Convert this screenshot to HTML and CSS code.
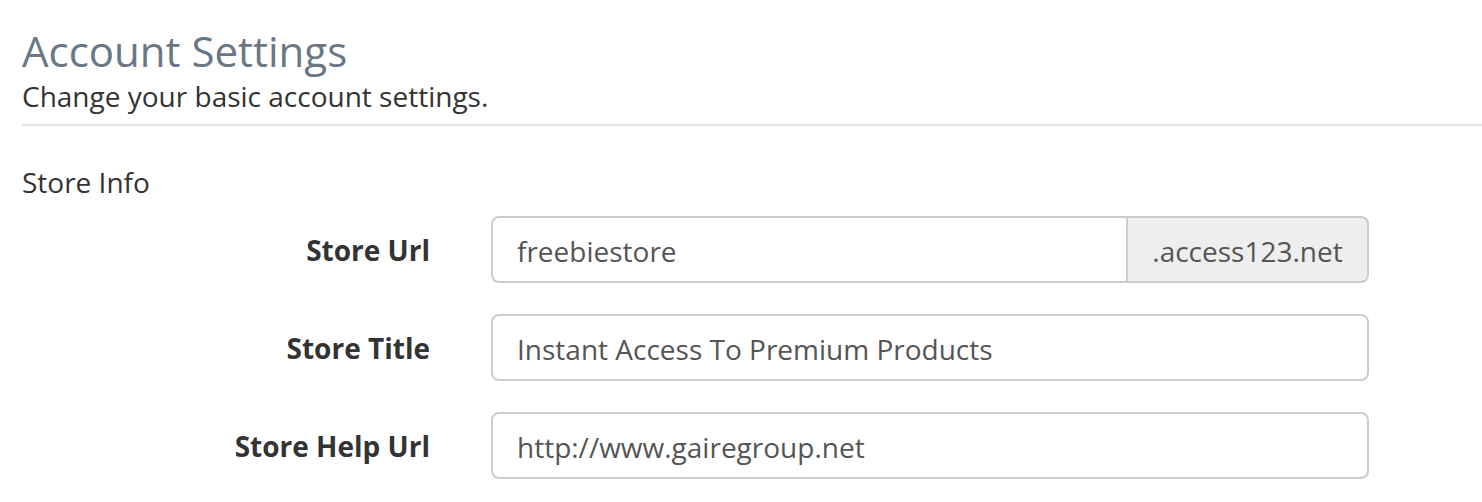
FILE: index.html
```html
<!DOCTYPE html>
<html lang="en">
<head>
    <meta charset="UTF-8">
    <meta name="viewport" content="width=device-width, initial-scale=1.0">
    <title>Account Settings</title>
    <link rel="stylesheet" href="styles.css">
</head>
<body>
    <div class="page">
        <div class="page-header">
            <h1>Account Settings</h1>
            <p class="subtitle">Change your basic account settings.</p>
        </div>

        <form class="settings-form">
            <h3 class="section-title">Store Info</h3>

            <div class="form-row">
                <label for="storeUrl">Store Url</label>
                <div class="input-group">
                    <input type="text" id="storeUrl" value="freebiestore">
                    <span class="addon">.access123.net</span>
                </div>
            </div>

            <div class="form-row">
                <label for="storeTitle">Store Title</label>
                <input type="text" id="storeTitle" value="Instant Access To Premium Products">
            </div>

            <div class="form-row">
                <label for="storeHelp">Store Help Url</label>
                <input type="text" id="storeHelp" value="http://www.gairegroup.net">
            </div>
        </form>
    </div>
</body>
</html>
```

FILE: styles.css
```css
body {
    font-family: "Open Sans", Arial, sans-serif;
    background-color: #fff;
    color: #333;
    margin: 0;
    overflow: hidden;
}

.page {
    padding: 22px 0 0 22px;
}

.page-header {
    border-bottom: 2px solid #e4e7ea;
    padding-bottom: 12px;
}

h1 {
    font-size: 42px;
    font-weight: 400;
    color: #6a7885;
    margin: 0;
    line-height: 58px;
}

.subtitle {
    font-size: 28px;
    margin: 0;
    line-height: 32px;
    color: #333;
}

.section-title {
    font-size: 28px;
    font-weight: 400;
    margin: 36px 0 14px;
    line-height: 40px;
}

.form-row {
    display: grid;
    grid-template-columns: 408px 878px;
    column-gap: 61px;
    align-items: center;
    margin-bottom: 31px;
}

label {
    font-weight: bold;
    font-size: 28px;
    text-align: right;
    color: #333;
}

input[type="text"] {
    font-family: inherit;
    font-size: 28px;
    color: #555;
    height: 67px;
    padding: 3px 24px 0;
    border: 2px solid #ccc;
    border-radius: 8px;
    box-sizing: border-box;
    width: 100%;
    outline: none;
}

.input-group {
    display: flex;
}

.input-group input[type="text"] {
    border-radius: 8px 0 0 8px;
    flex: 1;
    min-width: 0;
}

.addon {
    display: flex;
    align-items: center;
    justify-content: center;
    width: 241px;
    box-sizing: border-box;
    padding-top: 3px;
    font-size: 28px;
    color: #555;
    background-color: #eee;
    border: 2px solid #ccc;
    border-left: none;
    border-radius: 0 8px 8px 0;
}
```
